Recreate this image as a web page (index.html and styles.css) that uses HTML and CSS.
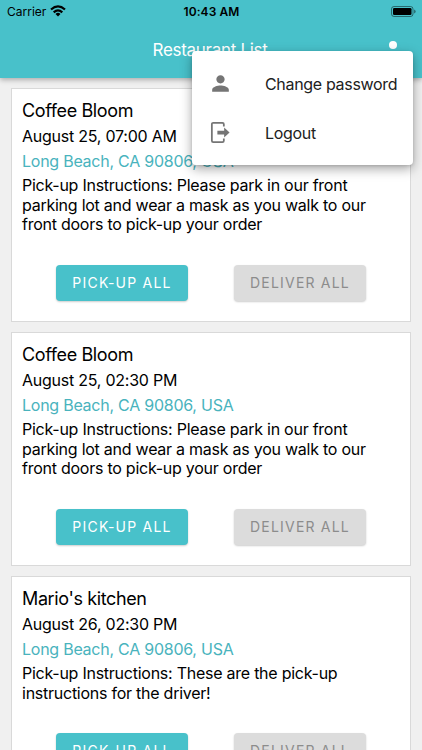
FILE: index.html
```html
<!DOCTYPE html>
<html lang="en">
<head>
<meta charset="utf-8">
<meta name="viewport" content="width=device-width, initial-scale=1">
<title>Restaurant List</title>
<link rel="stylesheet" href="styles.css">
</head>
<body>
<header class="app-bar">
  <div class="status">
    <div class="carrier"><span>Carrier</span>
      <svg class="wifi" viewBox="0 0 16 12"><g fill="none" stroke="#000" stroke-width="2.2"><path d="M1 4.5Q8-1.8 15 4.5"/><path d="M3.7 7.4Q8 3.5 12.3 7.4"/></g><path d="M5.5 8.9Q8 6.8 10.5 8.9L8 11.5Z"/></svg>
    </div>
    <time class="clock">10:43 AM</time>
    <svg class="battery" viewBox="0 0 25 11"><rect x=".5" y=".5" width="21.5" height="10" rx="2.5" fill="none" stroke="#000" stroke-opacity=".45"/><rect x="2" y="2" width="18.5" height="7" rx="1.2"/><path d="M23.2 3.6q1.4.5 1.4 1.9t-1.4 1.9z" fill-opacity=".5"/></svg>
  </div>
  <div class="toolbar">
    <h1>Restaurant List</h1>
    <svg class="more" viewBox="0 0 8 28" fill="#fff"><circle cx="4" cy="4" r="4"/><circle cx="4" cy="14" r="4"/><circle cx="4" cy="24" r="4"/></svg>
  </div>
</header>
<main class="list">
  <article class="card">
    <h2>Coffee Bloom</h2>
    <p class="date">August 25, 07:00 AM</p>
    <p class="address">Long Beach, CA 90806, USA</p>
    <p class="note">Pick-up Instructions: Please park in our front<br>parking lot and wear a mask as you walk to our<br>front doors to pick-up your order</p>
    <div class="actions"><button class="pickup">PICK-UP ALL</button><button class="deliver">DELIVER ALL</button></div>
  </article>
  <article class="card">
    <h2>Coffee Bloom</h2>
    <p class="date">August 25, 02:30 PM</p>
    <p class="address">Long Beach, CA 90806, USA</p>
    <p class="note">Pick-up Instructions: Please park in our front<br>parking lot and wear a mask as you walk to our<br>front doors to pick-up your order</p>
    <div class="actions"><button class="pickup">PICK-UP ALL</button><button class="deliver">DELIVER ALL</button></div>
  </article>
  <article class="card">
    <h2>Mario's kitchen</h2>
    <p class="date">August 26, 02:30 PM</p>
    <p class="address">Long Beach, CA 90806, USA</p>
    <p class="note">Pick-up Instructions: These are the pick-up<br>instructions for the driver!</p>
    <div class="actions"><button class="pickup">PICK-UP ALL</button><button class="deliver">DELIVER ALL</button></div>
  </article>
</main>
<nav class="menu">
  <a class="menu-item"><svg viewBox="0 0 24 24"><path d="M12 12c2.21 0 4-1.79 4-4s-1.79-4-4-4-4 1.79-4 4 1.79 4 4 4zm0 2c-2.67 0-8 1.34-8 4v2h16v-2c0-2.66-5.33-4-8-4z"/></svg><span>Change password</span></a>
  <a class="menu-item"><svg viewBox="0 0 24 24"><path d="M9 10.2h6.5V7.2l5.2 4.8-5.2 4.8v-3H9z"/><path d="M15.2 6.2V4a1.3 1.3 0 0 0-1.3-1.3H5A1.3 1.3 0 0 0 3.7 4v16A1.3 1.3 0 0 0 5 21.3h8.9a1.3 1.3 0 0 0 1.3-1.3v-2.2" fill="none" stroke="#757575" stroke-width="1.7"/></svg><span>Logout</span></a>
</nav>
</body>
</html>
```
FILE: styles.css
```css
* { box-sizing: border-box; }
body {
  margin: 0;
  height: 750px;
  overflow: hidden;
  position: relative;
  background: #f0f0f0;
  color: #000;
  font-family: Inter, "Liberation Sans", sans-serif;
}
h1, h2, p { margin: 0; font-weight: 400; white-space: nowrap; }
.app-bar {
  position: relative;
  height: 78px;
  background: #48c1ca;
  box-shadow: 0 2px 5px rgba(0, 0, 0, .28);
}
.status {
  display: grid;
  grid-template-columns: 1fr auto 1fr;
  align-items: center;
  height: 22px;
  padding: 0 6px 0 7px;
}
.carrier { display: flex; align-items: center; gap: 4px; font-size: 12px; letter-spacing: 0; }
.wifi { width: 16px; height: 12px; }
.clock { font-size: 12px; font-weight: 600; letter-spacing: .1px; }
.battery { width: 25px; height: 11px; justify-self: end; }
.toolbar {
  display: flex;
  justify-content: center;
  height: 56px;
  padding: 17px 2px 0 0;
  position: relative;
}
h1 { color: #fff; font-size: 17px; line-height: 22px; letter-spacing: -.3px; }
.more { position: absolute; right: 25px; top: 19px; width: 8px; height: 28px; }
.list { display: grid; gap: 10px; height: 672px; overflow: hidden; padding: 10px 11px 0; }
.card {
  height: 234px;
  padding: 10px;
  background: #fff;
  border: 1px solid #d9d9d9;
}
h2 { font-size: 18px; line-height: 24px; letter-spacing: -.38px; }
.date { font-size: 16px; line-height: 20px; margin-top: 3px; letter-spacing: -.24px; }
.address { font-size: 16px; line-height: 20px; margin-top: 5px; color: #49b3bd; letter-spacing: -.25px; }
.note { font-size: 16px; line-height: 19.7px; margin-top: 5px; letter-spacing: -.25px; }
.actions { display: flex; justify-content: space-between; padding: 0 34px; margin-top: 30px; }
button {
  width: 132px;
  height: 36px;
  padding: 0;
  border: 0;
  border-radius: 4px;
  font: 400 14px/36px Inter, sans-serif;
  letter-spacing: 1.2px;
  box-shadow: 0 1px 2px rgba(0, 0, 0, .2);
}
.pickup { background: #48c1ca; color: #fff; }
.deliver { background: #dcdcdc; color: #8c8c8c; }
.menu {
  position: absolute;
  left: 192px;
  top: 51px;
  width: 221px;
  height: 114px;
  padding: 8px 0;
  border-radius: 4px;
  background: #fff;
  box-shadow: 0 4px 12px rgba(0, 0, 0, .35), 0 1px 3px rgba(0, 0, 0, .12);
}
.menu-item { display: flex; align-items: center; height: 49px; padding-left: 16px; color: #212121; font-size: 16px; letter-spacing: -.32px; white-space: nowrap; }
.menu-item svg { width: 25px; height: 25px; margin-right: 32px; fill: #757575; }
```
